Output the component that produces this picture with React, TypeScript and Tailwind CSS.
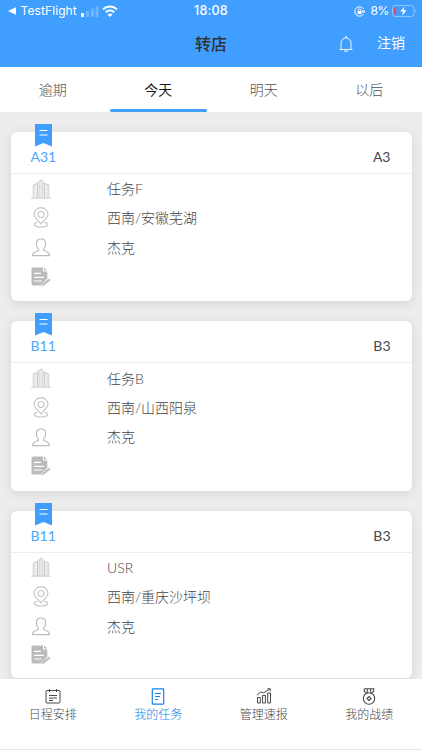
import React from "react";

type Task = { code: string; shop: string; name: string; place: string; person: string };

const tasks: Task[] = [
  { code: "A31", shop: "A3", name: "任务F", place: "西南/安徽芜湖", person: "杰克" },
  { code: "B11", shop: "B3", name: "任务B", place: "西南/山西阳泉", person: "杰克" },
  { code: "B11", shop: "B3", name: "USR", place: "西南/重庆沙坪坝", person: "杰克" },
];

const Buildings = () => (
  <svg width="20" height="20" viewBox="0 0 20 20" fill="none" stroke="#c4c4c4" strokeWidth="0.8">
    <path d="M0 19.200h20M2.200 19V6l4.300-1.600V19M7 19V3l3-2 3 2v16M13.500 19V4.400L17.800 6v13M10 1v18" />
    <path d="M3.700 6v13M5.100 5.500V19M14.900 5.500V19M16.400 6v13" strokeDasharray="1.200 0.600" />
    <path d="M8.500 3v16M11.500 3v16" stroke="#d4d4d4" />
  </svg>
);

const Pin = () => (
  <svg width="20" height="21" viewBox="0 0 20 21" fill="none" stroke="#c6c6c6" strokeWidth="1.100">
    <path d="M10 17C8 14 3.100 10.800 3.100 7.200a6.900 6.600 0 0 1 13.800 0C16.900 10.800 12 14 10 17Z" />
    <circle cx="10" cy="7.500" r="3" />
    <path d="M6.500 15.400c-4 .6-4.400 3.100-1 4 2.800.7 6.200.7 9 0 3.400-.9 3-3.400-1-4" />
  </svg>
);

const Person = () => (
  <svg width="20" height="20" viewBox="0 0 20 20" fill="none" stroke="#bcbcbc" strokeWidth="1.200" strokeLinejoin="round">
    <path d="M7.400 12.200C6 10.900 5.400 8.700 5.400 6.700 5.400 3.700 7.100 2 10 2s4.600 1.700 4.600 4.700c0 2-.6 4.200-2 5.500-.4 1 .2 1.400 1.300 1.800 3 .9 4.500 1.800 4.600 4.700h-17c.1-2.900 1.600-3.800 4.600-4.700 1.100-.4 1.700-.8 1.300-1.800Z" />
  </svg>
);

const Note = () => (
  <svg width="20" height="20" viewBox="0 0 20 20">
    <path d="M2 .4h10v4.200h4.300v7.200l-6.500 6.800H2A1.500 1.500 0 0 1 .5 17.100V1.900A1.500 1.500 0 0 1 2 .4Z" fill="#bbb" />
    <path d="m13 .6 3.200 3H13Z" fill="#bbb" />
    <path d="M3 6.400h7M3 10.300h10M3 14h8" stroke="#fff" strokeWidth="1.200" />
    <path d="m10.300 19.800.9-3 6.900-5.400 1.700 1.900-7 5.400Z" fill="#bbb" stroke="#fff" strokeWidth="0.500" />
  </svg>
);

const Field = ({ icon, text }: { icon: React.ReactNode; text?: string }) => (
  <div className="flex h-[29.300px] items-center">
    <div className="flex w-[76.500px] shrink-0 items-center">{icon}</div>
    <span>{text}</span>
  </div>
);

const Card = ({ task }: { task: Task }) => (
  <section className="relative h-[169.400px] shrink-0 rounded-[6px] bg-white px-5 shadow-[0_2px_12px_rgba(0,0,0,0.1)] last:h-[167px]">
    <svg className="absolute top-[-8px] left-[24.500px]" width="17" height="23" viewBox="0 0 17 23">
      <path d="M0 0h17v22.500l-8.500-3.600L0 22.500Z" fill="#409eff" />
      <path d="M4.500 6.500h8M4.500 11h8" stroke="#fff" strokeWidth="1.200" />
    </svg>
    <div className="-mx-5 flex h-[42px] items-end justify-between border-b border-[#ebeef5] px-5 pb-[6px] text-[14px] leading-[20px] font-normal">
      <span className="text-[#4ea5fd]">{task.code}</span>
      <span className="mr-[1px] text-[#44474c]">{task.shop}</span>
    </div>
    <div className="text-[14px] text-[#444548]">
      <Field icon={<Buildings />} text={task.name} />
      <Field icon={<Pin />} text={task.place} />
      <Field icon={<Person />} text={task.person} />
      <Field icon={<Note />} />
    </div>
  </section>
);

const CalendarIcon = () => (
  <svg width="16" height="16" viewBox="0 0 16 16" fill="none" stroke="currentColor">
    <rect x="1" y="2.500" width="14" height="12.500" rx="0.800" />
    <path d="M4.500 1v3M11.500 1v3M4 7.500h8M4 10h8M4 12.500h4" />
  </svg>
);
const TaskIcon = () => (
  <svg width="16" height="17" viewBox="0 0 16 17" fill="none" stroke="currentColor">
    <rect x="2.300" y="0.800" width="11.400" height="15.400" rx="0.800" strokeWidth="1.200" />
    <path d="M5 5.500h6M5 8.500h5M5 11.500h3" />
  </svg>
);
const ChartIcon = () => (
  <svg width="16" height="16" viewBox="0 0 16 16" fill="none" stroke="currentColor" strokeWidth="1">
    <path d="M1.500 9.500h2.800V15H1.500zM6.600 7.500h2.800V15H6.600zM11.700 5h2.800v10h-2.800z" />
    <path d="M1 7.200 4.700 4l3 .8 6-3.700M11.300.8h3v2.500" />
  </svg>
);
const MedalIcon = () => (
  <svg width="16" height="17" viewBox="0 0 16 17" fill="none" stroke="currentColor" strokeWidth="1.100">
    <circle cx="8" cy="10.500" r="5.700" />
    <path d="m8 8.500 2 2-2 2-2-2Z" />
    <path d="M3.300.8h9.400v2.700l-2.200 1.600M3.300.8v2.700l2.200 1.600M6.300.8v4M9.700.8v4" />
  </svg>
);

const tabs = ["逾期", "今天", "明天", "以后"];
const nav = [
  { label: "日程安排", icon: <CalendarIcon /> },
  { label: "我的任务", icon: <TaskIcon /> },
  { label: "管理速报", icon: <ChartIcon /> },
  { label: "我的战绩", icon: <MedalIcon /> },
];

export default function App() {
  return (
    <div className="flex h-[750px] w-[422px] flex-col overflow-hidden bg-[#ededed] font-[Lato,'Noto_Sans_CJK_SC',sans-serif] font-light">
      <header className="h-[67px] shrink-0 bg-[#409eff] text-white">
        <div className="grid h-[22px] grid-cols-3 items-center px-2 font-[Inter,sans-serif] text-[12px] font-normal">
          <div className="flex items-center">
            <svg width="9" height="8" viewBox="0 0 9 8" fill="white"><path d="M0 4 8 .3v7.400Z" /></svg>
            <span className="ml-[3.500px] text-[12px] tracking-[0.100px]">TestFlight</span>
            <svg className="ml-[4px]" width="18" height="12" viewBox="0 0 18 12" fill="white">
              <rect y="8" width="3" height="4" rx=".7" />
              <g opacity=".25"><rect x="5" y="6" width="3" height="6" rx=".7" /><rect x="10" y="3.500" width="3" height="8.500" rx=".7" /><rect x="14.500" y="1" width="3" height="11" rx=".7" /></g>
            </svg>
            <svg className="ml-[3.500px]" width="16" height="12" viewBox="0 0 16 12" fill="none" stroke="white" strokeWidth="2">
              <path d="M1 4.300c4-3.700 10-3.700 14 0M3.700 7.200c2.500-2.200 6.100-2.200 8.600 0" />
              <path d="m8 12-2.500-2.600c1.500-1.300 3.500-1.300 5 0Z" fill="white" stroke="none" />
            </svg>
          </div>
          <span className="text-center text-[12.500px] font-medium tracking-[0.200px]">18:08</span>
          <div className="-mr-[3px] flex items-center justify-end">
            <svg width="11" height="11" viewBox="0 0 11 11" fill="none" stroke="white" strokeWidth="1">
              <path d="M9.500 3A4.700 4.700 0 1 0 9.500 8M8 5h3L9.500 7Z" />
              <rect x="3.500" y="5" width="4" height="3" fill="white" stroke="none" /><path d="M4.300 5V4a1.200 1.200 0 0 1 2.400 0v1" strokeWidth=".8" />
            </svg>
            <span className="ml-[5px] text-[12px] tracking-[-0.300px]">8%</span>
            <svg className="ml-[3px]" width="25" height="12" viewBox="0 0 25 12" fill="none">
              <rect x=".5" y=".5" width="21.500" height="11" rx="3" stroke="white" strokeOpacity=".4" />
              <rect x="2" y="2" width="2.200" height="8" rx="1" fill="#d95468" />
              <path d="m12.500 1.500-4.300 5h2.900l-1 4.200 4.500-5.400h-3Z" fill="white" />
              <path d="M23.500 4.200c1 .5 1 3 0 3.600Z" fill="white" fillOpacity=".5" />
            </svg>
          </div>
        </div>
        <div className="grid h-[43px] grid-cols-3 items-center">
          <span />
          <h1 className="text-center text-[16px] leading-6 font-medium text-[#303133]">转店</h1>
          <div className="flex items-center justify-end pr-[17px] font-normal">
            <svg className="mt-[1px] mr-[24px]" width="14" height="16" viewBox="0 0 14 16" fill="none" stroke="white" strokeWidth=".9" strokeLinejoin="round">
              <path d="M.5 13.500h13M2 13.400V7a5 5 0 0 1 10 0v6.400M6 1.500a1 1 0 0 1 2 0M5.500 14.200a1.500 1.500 0 0 0 3 0" />
            </svg>
            <button className="-mt-[1px] text-[14px] leading-5">注销</button>
          </div>
        </div>
      </header>
      <nav className="grid h-[45px] shrink-0 grid-cols-4 bg-white text-[14px]">
        {tabs.map((tab, i) => (
          <button key={tab} className={`flex flex-col items-center justify-between pt-[12.500px] leading-5 ${i === 1 ? "font-normal text-[#18191b]" : "text-[#505154]"}`}>
            <span>{tab}</span>
            <span className={`h-[3px] w-[97px] rounded-full ${i === 1 ? "bg-[#409eff]" : ""}`} />
          </button>
        ))}
      </nav>
      <main className="flex h-[567px] shrink-0 flex-col gap-5 overflow-hidden px-[10.500px] pt-5">
        {tasks.map((task, i) => <Card key={i} task={task} />)}
      </main>
      <footer className="grid h-[71px] shrink-0 grid-cols-4 border-b border-[#e5e5e5] bg-white pt-2 text-[12px] text-[#48494c]">
        {nav.map((item, i) => (
          <button key={item.label} className={`flex flex-col items-center gap-[1px] ${i === 1 ? "text-[#1680f0]" : ""}`}>
            <span className="flex h-[18px] items-center">{item.icon}</span>
            <span className="leading-[18px]">{item.label}</span>
          </button>
        ))}
      </footer>
    </div>
  );
}
